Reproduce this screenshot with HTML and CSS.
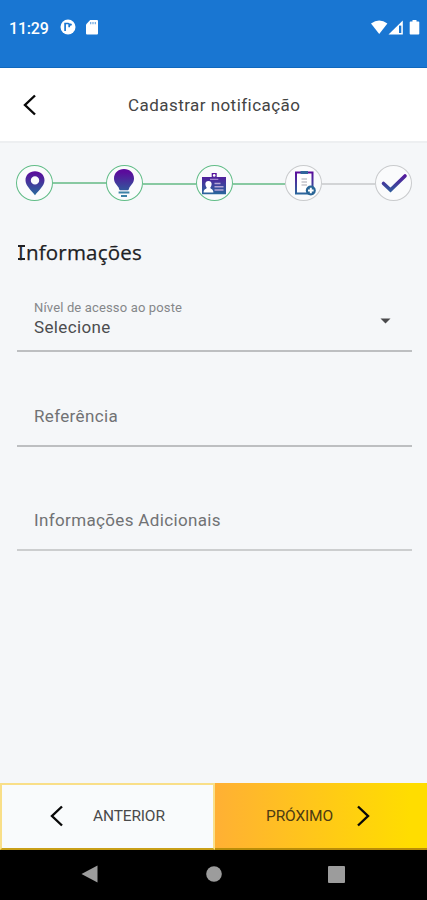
FILE: index.html
```html
<!DOCTYPE html>
<html lang="pt-BR">
<head>
<meta charset="utf-8">
<meta name="viewport" content="width=device-width, initial-scale=1">
<title>Cadastrar notificação</title>
<link rel="stylesheet" href="styles.css">
</head>
<body>
<div class="status">
  <span class="clock">11:29</span>
  <svg class="app-icon" width="16" height="16" viewBox="0 0 16 16"><circle cx="8" cy="8" r="7.5" fill="#fff"/><path d="M5.100 12V4.500h3.100q1 0 1 1v2.800" fill="none" stroke="#1976d2" stroke-width="1.700"/><circle cx="10.600" cy="5.600" r="1.200" fill="#1976d2"/></svg>
  <svg class="sd-icon" width="12" height="15" viewBox="0 0 12 15"><path d="M4.2 0H11q1 0 1 1v12.5q0 1-1 1H1q-1 0-1-1V4.4z" fill="#fff"/><path d="M4.7 2v2.200M7 2v2.200M9.3 2v2.200" stroke="#6aa6e2" stroke-width="1.200"/></svg>
  <svg class="signals" width="49" height="15" viewBox="0 0 49 15"><path d="M0 3.6Q8.2-2.8 16.4 3.6L8.2 14z" fill="#fff"/><path d="M17.5 14.5L31.8.5v14z" fill="#fff"/><path d="M28 5.6h2.3v7.4H28z" fill="#1976d2"/><path d="M39.500 1.500h2V0h4v1.500h2q.8 0 .8.800v11.400q0 .8-.8.800h-8q-.8 0-.8-.8V2.300q0-.8.8-.8z" fill="#fff"/></svg>
</div>
<header class="toolbar">
  <svg class="chevron" width="14" height="22" viewBox="0 0 14 22"><path d="M13 1.500L3 11l10 9.500"/></svg>
  <h1><span>Cadastrar notificação</span></h1>
</header>
<main>
  <div class="steps">
    <div class="step done"><svg viewBox="0 0 36 36"><defs><linearGradient id="ink" gradientUnits="userSpaceOnUse" x1="18" y1="7" x2="18" y2="30"><stop stop-color="#5b0b9c"/><stop offset="1" stop-color="#286a9c"/></linearGradient></defs><path fill="url(#ink)" fill-rule="evenodd" d="M18 6.300c-5.500 0-9.500 3.800-9.500 9 0 5.500 5.500 9.700 9.500 15 4-5.300 9.500-9.500 9.500-15 0-5.200-4-9-9.500-9zm0 4.900a4.200 4.200 0 110 8.400 4.200 4.200 0 010-8.400z"/></svg></div>
    <i class="line high"></i>
    <div class="step done"><svg viewBox="0 0 36 36"><path fill="url(#ink)" d="M18 4c-5.800 0-10 4-10 9.400 0 4.600 3.200 6.300 4.600 9.200.4.900.5 2.600 1.400 2.600h8c.9 0 1-1.700 1.400-2.600 1.400-2.900 4.600-4.600 4.600-9.200 0-5.400-4.200-9.400-10-9.400z"/><path d="M12.600 27.600h10.800M15 31h6" fill="none" stroke="#3b80a5" stroke-width="2"/></svg></div>
    <i class="line"></i>
    <div class="step done"><svg viewBox="0 0 36 36"><path fill="url(#ink)" d="M6 12h24v17.300H6zM15.700 8h5v5h-5z"/><circle cx="18.200" cy="10.400" r="1.300" fill="#fff"/><path d="M14 14.300h8.300" stroke="#b69bdb" stroke-width="1"/><path fill="#fff" d="M12.500 16c-2.200 0-3.400 1.500-3.100 3.600.2 1.700.9 2.300 1.300 3.200-.4 1.500-3.100 1.200-3.100 4.700h9.800c0-3.500-2.700-3.200-3.100-4.700.4-.9 1.100-1.500 1.300-3.200.3-2.100-.9-3.600-3.100-3.600z"/><path d="M18.500 18.500h6M18.500 21.700h9M18.500 25h9" stroke="#b4a5d6" stroke-width="1.400"/></svg></div>
    <i class="line"></i>
    <div class="step"><svg viewBox="0 0 36 36"><path d="M10 7.500h16.500v21H10z" fill="#fff" stroke="url(#ink)" stroke-width="2"/><path d="M14.500 6h7.500v3h-7.500z" fill="#30659b"/><path d="M15.500 14h5.500M15.500 17h5.500M15.500 20h5.500" stroke="#c4c4ca" stroke-width="1.600"/><circle cx="24.800" cy="25.500" r="5" fill="#286596"/><path d="M24.800 22.700v5.600M22 25.500h5.600" stroke="#fff" stroke-width="2"/></svg></div>
    <i class="line pending"></i>
    <div class="step"><svg viewBox="0 0 36 36"><path d="M7.500 18.500l7 6.500L29 11" fill="none" stroke="url(#ink)" stroke-width="3.600" stroke-linecap="round"/></svg></div>
  </div>
  <h2>Informações</h2>
  <div class="field select">
    <div><div class="label"><span>Nível de acesso ao poste</span></div><div class="value"><span>Selecione</span></div></div>
    <svg class="caret" width="11" height="6" viewBox="0 0 11 6"><path d="M.5.500h10L5.500 5.500z" fill="#4a4a4c"/></svg>
  </div>
  <div class="field ref"><span>Referência</span></div>
  <div class="field info"><span>Informações Adicionais</span></div>
</main>
<div class="actions">
  <button class="prev"><svg class="chevron" width="14" height="22" viewBox="0 0 14 22"><path d="M12 1.500L2 11l10 9.500"/></svg><span>ANTERIOR</span></button>
  <button class="next"><span>PRÓXIMO</span><svg class="chevron" width="14" height="22" viewBox="0 0 14 22"><path d="M2 1.500L12 11 2 20.500"/></svg></button>
</div>
<nav class="android">
  <svg width="17" height="18" viewBox="0 0 17 18"><path d="M16.500.5v17L.5 9z"/></svg>
  <svg class="home" width="16" height="16" viewBox="0 0 16 16"><circle cx="8" cy="8" r="7.800"/></svg>
  <svg width="17" height="17" viewBox="0 0 17 17"><rect width="17" height="17" rx="1"/></svg>
</nav>
</body>
</html>
```
FILE: styles.css
```css
* { box-sizing: border-box; }
body {
  margin: 0;
  height: 900px;
  display: flex;
  flex-direction: column;
  background: #f5f7f9;
  font-family: Roboto, sans-serif;
  overflow: hidden;
}
svg { flex: none; display: block; }
h1, h2 { margin: 0; font-weight: 400; }
.status {
  height: 68px;
  flex: none;
  display: flex;
  align-items: flex-start;
  padding: 20px 7px 0 9px;
  background: #1976d2;
  border-bottom: 1px solid #1068bd;
  color: #fff;
}
.clock { width: 51px; font-size: 16px; line-height: 17px; font-weight: 500; letter-spacing: -.2px; }
.app-icon { margin-top: -1px; }
.sd-icon { margin-left: 10px; }
.signals { margin-left: auto; }
.toolbar {
  height: 75px;
  flex: none;
  display: flex;
  align-items: center;
  padding-left: 22px;
  background: #fff;
  border-bottom: 2px solid #edeff1;
}
.toolbar h1 { margin-left: 92px; font-size: 17px; line-height: 20px; letter-spacing: .45px; color: #444; }
.chevron { fill: none; stroke: #080808; stroke-width: 2.4; }
main { flex: 1; padding: 22px 15px 0 16px; }
.steps { display: flex; align-items: center; height: 36px; }
.step {
  width: 37px;
  height: 36px;
  flex: none;
  border: 1.500px solid #c9cbcd;
  border-radius: 50%;
  background: #fafbfc;
}
.step.done { border-color: #62bd88; }
.step svg { width: 36px; height: 36px; margin: -1px 0 0 -.5px; }
.line { flex: 1; height: 2px; margin-top: 2px; background: #88c9a2; }
.line.high { margin-top: -1px; }
.line.pending { background: #d2d4d6; }
/* The capital I carries thin top and bottom bars. */
h2 {
  position: relative;
  margin: 38px 0 0 1px;
  padding-left: 1px;
  font: 500 20.5px/26px "Open Sans", sans-serif;
  letter-spacing: .2px;
  color: #202124;
  -webkit-text-stroke: .25px #202124;
}
h2::first-letter { margin-right: 2px; }
h2::before {
  content: "";
  position: absolute;
  left: 1px;
  top: 6px;
  width: 7px;
  height: 15px;
  background: linear-gradient(#202124, #202124) 0 0 / 100% 2px no-repeat, linear-gradient(#202124, #202124) 0 100% / 100% 2px no-repeat;
}
.field {
  display: flex;
  align-items: flex-end;
  margin-left: 1px;
  padding-left: 17px;
  border-bottom: 2px solid #bdbfc1;
  font-size: 17px;
  line-height: 20px;
  letter-spacing: .35px;
  color: #717274;
}
.select { height: 87px; padding: 0 21px 13px 17px; justify-content: space-between; }
.label { font-size: 13px; line-height: 18px; letter-spacing: .15px; color: #85878a; }
.value { color: #4c4d4f; }
.caret { margin-bottom: 13px; }
.ref { height: 95px; padding-bottom: 19px; }
.info { height: 104px; padding-bottom: 19px; border-color: #cccecf; }
.actions { display: flex; flex: none; height: 67px; }
.actions button {
  flex: none;
  display: flex;
  align-items: center;
  margin: 0;
  border: 0;
  font: 400 15.5px/20px Roboto, sans-serif;
  letter-spacing: -.15px;
  color: #4a4a4a;
}
.actions .prev { width: 215px; padding: 0 0 2px 48px; gap: 29px; background: #f9fbfc; border: 2px solid #f9df88; border-bottom-color: #c89f18; }
.actions .next { width: 212px; padding: 1px 0 0 51px; gap: 23px; color: #4d3b12; background: linear-gradient(90deg, #ffb034, #ffdd00 92%); border-bottom: 2px solid #b98d08; }
.android {
  height: 50px;
  flex: none;
  display: flex;
  align-items: center;
  padding: 0 0 2px 81px;
  background: #000;
}
.android svg { fill: #9c9c9c; }
.android .home { margin: 0 106px 0 108px; }
```
